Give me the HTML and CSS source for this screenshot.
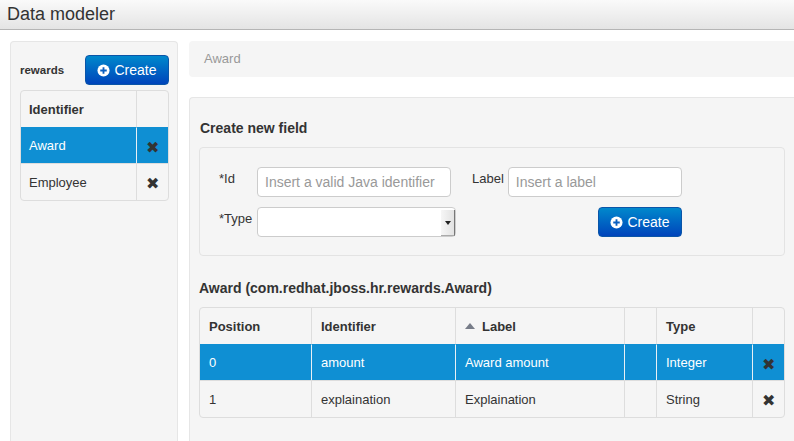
FILE: index.html
```html
<!DOCTYPE html>
<html lang="en">
  <head>
    <meta charset="UTF-8" />
    <title>Data modeler</title>
    <link rel="stylesheet" href="styles.css">
  </head>
  <body>
    <div class="title-bar">Data modeler</div>

    <div class="content">
      <div class="sidebar">
        <div class="sidebar-top">
          <span class="project">rewards</span>
          <button class="btn">
            <svg class="plus" viewBox="0 0 14 14"><circle cx="7" cy="7" r="6.5" fill="#fff"/><path d="M3.5 7h7M7 3.5v7" stroke="#0a5fc0" stroke-width="2"/></svg>
            Create
          </button>
        </div>
        <table class="grid objects">
          <tr><th>Identifier</th><th class="col-x"></th></tr>
          <tr class="selected"><td>Award</td><td class="col-x"><span class="del">&#10006;</span></td></tr>
          <tr><td>Employee</td><td class="col-x"><span class="del">&#10006;</span></td></tr>
        </table>
      </div>

      <div class="main">
        <div class="breadcrumb">Award</div>

        <div class="panel">
          <h4 class="new-title">Create new field</h4>
          <div class="well">
            <div class="form-row">
              <label class="lbl-main">*Id</label>
              <input class="input input-id" type="text" placeholder="Insert a valid Java identifier" />
              <label class="lbl-label">Label</label>
              <input class="input input-label" type="text" placeholder="Insert a label" />
            </div>
            <div class="form-row row-type">
              <label class="lbl-main">*Type</label>
              <div class="select"><span class="select-arrow"></span></div>
              <button class="btn btn-right">
                <svg class="plus" viewBox="0 0 14 14"><circle cx="7" cy="7" r="6.5" fill="#fff"/><path d="M3.5 7h7M7 3.5v7" stroke="#0a5fc0" stroke-width="2"/></svg>
                Create
              </button>
            </div>
          </div>

          <h4 class="fields-title">Award (com.redhat.jboss.hr.rewards.Award)</h4>
          <table class="grid fields">
            <tr>
              <th class="c-pos">Position</th>
              <th class="c-id">Identifier</th>
              <th class="c-label"><span class="sort-up"></span>Label</th>
              <th class="c-blank"></th>
              <th class="c-type">Type</th>
              <th class="col-x"></th>
            </tr>
            <tr class="selected">
              <td>0</td><td>amount</td><td>Award amount</td><td></td><td>Integer</td>
              <td class="col-x"><span class="del">&#10006;</span></td>
            </tr>
            <tr>
              <td>1</td><td>explaination</td><td>Explaination</td><td></td><td>String</td>
              <td class="col-x"><span class="del">&#10006;</span></td>
            </tr>
          </table>
        </div>
      </div>
    </div>
  </body>
</html>
```

FILE: styles.css
```css
html,
body {
  height: 441px;
  overflow: hidden;
}
body {
  margin: 0;
  font-family: "Liberation Sans", Arial, sans-serif;
  font-size: 13px;
  color: #333;
  background-color: #fff;
}
.title-bar {
  height: 29px;
  line-height: 29px;
  padding-left: 7px;
  font-size: 18px;
  background: linear-gradient(#fafafa, #e4e4e4);
  border-bottom: 1px solid #b5b5b5;
}
.content {
  display: flex;
  align-items: stretch;
  padding: 11px 0 0 10px;
  gap: 11px;
  height: 400px;
}
.sidebar {
  width: 168px;
  box-sizing: border-box;
  padding: 13px 8px 0 9px;
  background-color: #f5f5f5;
  border: 1px solid #e6e6e6;
  border-bottom: none;
  border-radius: 4px 4px 0 0;
}
.sidebar-top {
  display: flex;
  justify-content: space-between;
  align-items: center;
  margin-bottom: 5px;
}
.project {
  font-size: 11.5px;
  font-weight: bold;
}
.btn {
  display: flex;
  align-items: center;
  justify-content: center;
  gap: 4px;
  width: 84px;
  height: 30px;
  padding: 0;
  color: #fff;
  font-family: inherit;
  font-size: 14px;
  background: linear-gradient(#0088cc, #0044bb);
  border: 1px solid #0a55a8;
  border-radius: 4px;
}
.plus {
  width: 13px;
  height: 13px;
}
.main {
  flex: 1;
  display: flex;
  flex-direction: column;
  gap: 20px;
}
.breadcrumb {
  height: 36px;
  line-height: 36px;
  padding-left: 15px;
  color: #999;
  background-color: #f5f5f5;
  border-radius: 4px 0 0 4px;
}
.panel {
  flex: 1;
  box-sizing: border-box;
  padding: 20px 9px 0 9px;
  background-color: #f5f5f5;
  border-top: 1px solid #e6e6e6;
  border-left: 1px solid #e6e6e6;
  border-radius: 4px 0 0 0;
}
h4 {
  margin: 0;
  font-size: 14px;
  line-height: 20px;
}
.new-title {
  padding-left: 1px;
}
.well {
  box-sizing: border-box;
  height: 109px;
  margin-top: 9px;
  padding: 19px 0 0 19px;
  border: 1px solid #e3e3e3;
  border-radius: 4px;
}
.form-row {
  display: flex;
  align-items: flex-start;
}
.row-type {
  margin-top: 10px;
}
.lbl-main {
  width: 38px;
  line-height: 24px;
}
.lbl-label {
  margin-left: 21px;
  margin-right: 4px;
  line-height: 24px;
}
.input {
  box-sizing: border-box;
  height: 30px;
  padding: 0 7px;
  font-family: inherit;
  font-size: 14px;
  background-color: #fff;
  border: 1px solid #ccc;
  border-radius: 4px;
}
.input::placeholder {
  color: #999;
  opacity: 1;
}
.input-id {
  width: 194px;
}
.input-label {
  width: 174px;
}
.select {
  position: relative;
  box-sizing: border-box;
  width: 199px;
  height: 30px;
  background-color: #fff;
  border: 1px solid #ccc;
  border-radius: 4px;
}
.select::after {
  content: "";
  position: absolute;
  top: 2px;
  right: 0;
  bottom: 0;
  width: 13px;
  background: linear-gradient(90deg, #f6f6f6, #e2e2e2);
  border-right: 1px solid #777;
  border-bottom: 1px solid #aaa;
}
.select-arrow {
  position: absolute;
  z-index: 1;
  top: 13px;
  right: 4px;
  border-top: 4px solid #222;
  border-left: 3px solid transparent;
  border-right: 3px solid transparent;
}
.btn-right {
  margin-left: 142px;
}
.fields-title {
  margin-top: 22px;
}
.grid {
  border-collapse: separate;
  border-spacing: 0;
  table-layout: fixed;
  border: 1px solid #ddd;
  border-radius: 4px;
}
.grid th,
.grid td {
  height: 36px;
  padding: 0 9px;
  box-sizing: border-box;
  text-align: left;
  border-left: 1px solid #ddd;
  border-top: 1px solid #ddd;
}
.grid th {
  border-top: none;
}
.grid th:first-child,
.grid td:first-child {
  border-left: none;
}
.grid td.col-x,
.grid th.col-x {
  padding: 0;
  text-align: center;
}
.grid tr:last-child td {
  height: 37px;
}
.grid .selected td {
  color: #fff;
  background-color: #0f8fd3;
  border-top-color: #0f8fd3;
  border-left-color: #e8f0f5;
}
.del {
  position: relative;
  top: 2px;
  font-size: 16px;
  line-height: 16px;
  color: #333;
}
.objects {
  width: 149px;
}
.objects th:first-child {
  width: 115px;
}
.objects th:first-child,
.objects td:first-child {
  padding-left: 8px;
}
.fields {
  width: 586px;
  margin-top: 9px;
}
.c-pos {
  width: 111px;
}
.c-id {
  width: 144px;
}
.c-label {
  width: 169px;
}
.c-blank {
  width: 32px;
}
.c-type {
  width: 96px;
}
.sort-up {
  display: inline-block;
  margin-right: 7px;
  vertical-align: 2px;
  border-bottom: 6px solid #777c88;
  border-left: 5px solid transparent;
  border-right: 5px solid transparent;
}
```
